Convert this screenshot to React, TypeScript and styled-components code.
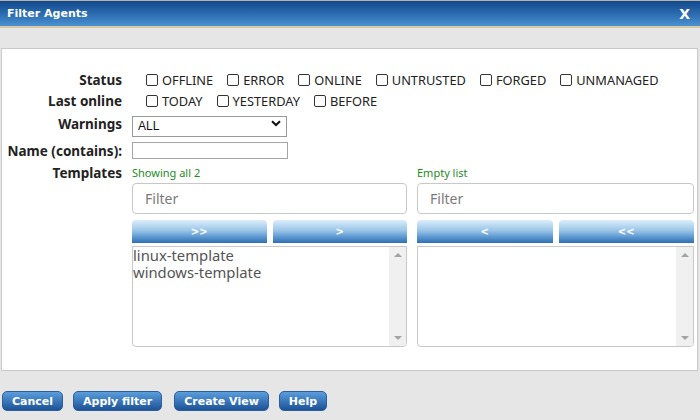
import styled, { createGlobalStyle } from "styled-components";

const GlobalStyle = createGlobalStyle`
  html, body {
    margin: 0;
    padding: 0;
    background: #e6e6e6;
  }
  body {
    font-family: "Noto Sans", "DejaVu Sans", sans-serif;
    width: 700px;
    height: 420px;
    overflow: hidden;
  }
`;

const Dialog = styled.div`
  display: flex;
  flex-direction: column;
  width: 700px;
  height: 420px;
  background: #e6e6e6;
  border-top: 1px solid #b9b3a6;
  box-sizing: border-box;
`;

const TitleBar = styled.div`
  display: flex;
  align-items: center;
  justify-content: space-between;
  height: 25px;
  padding: 0 10px 0 7px;
  background: linear-gradient(to bottom, #134a8e 0%, #2d6db1 55%, #4b93d2 100%);
  border-bottom: 2px solid #d8c9a3;
  color: #fff;
  font-family: "DejaVu Sans", Verdana, sans-serif;
  font-weight: bold;
  font-size: 11px;
`;

const CloseX = styled.span`
  font-size: 14px;
  font-weight: bold;
`;

const Panel = styled.div`
  margin: 20px 2px 0 1px;
  height: 323px;
  box-sizing: border-box;
  background: #fff;
  border: 1px solid #c9c9c9;
  padding: 20px 3px 0 0;
`;

const Form = styled.div`
  display: grid;
  grid-template-columns: 120px 1fr;
  column-gap: 10px;
  align-items: center;
`;

const Label = styled.div<{ $top?: boolean }>`
  text-align: right;
  font-weight: bold;
  font-size: 13.5px;
  color: #222;
  align-self: ${(p) => (p.$top ? "start" : "center")};
  margin-top: ${(p) => (p.$top ? "-2px" : "0")};
  white-space: nowrap;
`;

const Options = styled.div`
  display: flex;
  align-items: center;
  height: 21px;
`;

const Option = styled.label`
  display: flex;
  align-items: center;
  gap: 4px;
  padding-left: 14px;
  font-size: 12.8px;
  color: #222;
`;

const Check = styled.input.attrs({ type: "checkbox" })`
  appearance: none;
  margin: 0;
  width: 12px;
  height: 12px;
  border: 1px solid #333;
  border-radius: 2px;
  background: #fff;
`;

const SelectWrap = styled.div`
  position: relative;
  width: 155px;
  height: 21px;
  margin: 2px 0;
`;

const Select = styled.select`
  appearance: none;
  width: 100%;
  height: 100%;
  box-sizing: border-box;
  border: 1px solid #999;
  border-radius: 0;
  background: #fff;
  font-family: "Liberation Sans", Arial, sans-serif;
  font-size: 12px;
  padding: 0 0 0 5px;
  color: #111;
`;

const Chevron = styled.svg`
  position: absolute;
  right: 6px;
  top: 7px;
  pointer-events: none;
`;

const TextInput = styled.input`
  width: 156px;
  height: 17px;
  box-sizing: border-box;
  border: 1px solid #a5a5a5;
  margin: 6px 0 7px;
  padding: 0;
`;

const Templates = styled.div`
  display: grid;
  grid-template-columns: 275px 277px;
  column-gap: 10px;
`;

const Pane = styled.div`
  display: flex;
  flex-direction: column;
`;

const Count = styled.div`
  color: #1e8c1e;
  font-size: 11px;
  height: 17px;
  line-height: 14px;
`;

const Filter = styled.input`
  height: 31px;
  box-sizing: border-box;
  border: 1px solid #c8c8c8;
  border-radius: 4px;
  padding: 0 12px;
  font-family: "Noto Sans", sans-serif;
  font-size: 14px;
  color: #333;
  &::placeholder {
    color: #7a7a7a;
  }
`;

const Moves = styled.div`
  display: grid;
  grid-template-columns: 1fr 1fr;
  column-gap: 6px;
  margin-top: 6px;
`;

const MoveButton = styled.button`
  height: 23px;
  border: none;
  border-radius: 4px 4px 0 0;
  background: linear-gradient(to bottom, #dbeefb 0%, #9cc6e8 45%, #5a96cf 75%, #2f6fb2 100%);
  color: #fff;
  font-family: "DejaVu Sans", Verdana, sans-serif;
  font-weight: bold;
  font-size: 10px;
  padding: 0;
`;

const ListBox = styled.div`
  display: flex;
  height: 101px;
  margin-top: 3px;
  border: 1px solid #c8c8c8;
  border-radius: 0 0 4px 4px;
  box-sizing: border-box;
  overflow: hidden;
`;

const Items = styled.div`
  flex: 1;
`;

const Item = styled.div`
  font-family: "Noto Sans", sans-serif;
  font-size: 14.8px;
  line-height: 17px;
  height: 17px;
  color: #555;
`;

const Scrollbar = styled.div`
  display: flex;
  flex-direction: column;
  justify-content: space-between;
  align-items: center;
  width: 17px;
  background: #f0f0f0;
  padding: 6px 0;
  box-sizing: border-box;
`;

const Arrow = styled.span<{ $down?: boolean }>`
  width: 0;
  height: 0;
  border-left: 4px solid transparent;
  border-right: 4px solid transparent;
  ${(p) =>
    p.$down
      ? "border-top: 4px solid #a3a3a3;"
      : "border-bottom: 4px solid #a3a3a3;"}
`;

const Footer = styled.div`
  display: flex;
  gap: 10px;
  margin: 20px 0 0 2px;
`;

const ActionButton = styled.button`
  height: 20px;
  padding: 0 9px;
  border: 1px solid #2b5f9c;
  border-radius: 5px;
  background: linear-gradient(to bottom, #5c9ddb 0%, #3a78bb 50%, #1d5296 100%);
  color: #fff;
  font-family: "DejaVu Sans", Verdana, sans-serif;
  font-weight: bold;
  font-size: 11px;
  &:nth-child(2) {
    margin-right: 2px;
  }
`;

const STATUS = ["OFFLINE", "ERROR", "ONLINE", "UNTRUSTED", "FORGED", "UNMANAGED"];
const LAST_ONLINE = ["TODAY", "YESTERDAY", "BEFORE"];

const TemplatePane = ({
  count,
  buttons,
  items,
}: {
  count: string;
  buttons: string[];
  items: string[];
}) => (
  <Pane>
    <Count>{count}</Count>
    <Filter placeholder="Filter" />
    <Moves>
      {buttons.map((b) => (
        <MoveButton key={b}>{b}</MoveButton>
      ))}
    </Moves>
    <ListBox>
      <Items>
        {items.map((i) => (
          <Item key={i}>{i}</Item>
        ))}
      </Items>
      <Scrollbar>
        <Arrow />
        <Arrow $down />
      </Scrollbar>
    </ListBox>
  </Pane>
);

export default function App() {
  return (
    <>
      <GlobalStyle />
      <Dialog>
        <TitleBar>
          <span>Filter Agents</span>
          <CloseX>X</CloseX>
        </TitleBar>
        <Panel>
          <Form>
            <Label>Status</Label>
            <Options>
              {STATUS.map((s) => (
                <Option key={s}>
                  <Check />
                  {s}
                </Option>
              ))}
            </Options>
            <Label>Last online</Label>
            <Options>
              {LAST_ONLINE.map((s) => (
                <Option key={s}>
                  <Check />
                  {s}
                </Option>
              ))}
            </Options>
            <Label>Warnings</Label>
            <SelectWrap>
              <Select defaultValue="ALL">
                <option>ALL</option>
              </Select>
              <Chevron width="10" height="7" viewBox="0 0 10 7">
                <path d="M1 1.2 L5 5 L9 1.2" fill="none" stroke="#111" strokeWidth="2" />
              </Chevron>
            </SelectWrap>
            <Label>Name (contains):</Label>
            <TextInput />
            <Label $top>Templates</Label>
            <Templates>
              <TemplatePane
                count="Showing all 2"
                buttons={[">>", ">"]}
                items={["linux-template", "windows-template"]}
              />
              <TemplatePane count="Empty list" buttons={["<", "<<"]} items={[]} />
            </Templates>
          </Form>
        </Panel>
        <Footer>
          <ActionButton>Cancel</ActionButton>
          <ActionButton>Apply filter</ActionButton>
          <ActionButton>Create View</ActionButton>
          <ActionButton>Help</ActionButton>
        </Footer>
      </Dialog>
    </>
  );
}
